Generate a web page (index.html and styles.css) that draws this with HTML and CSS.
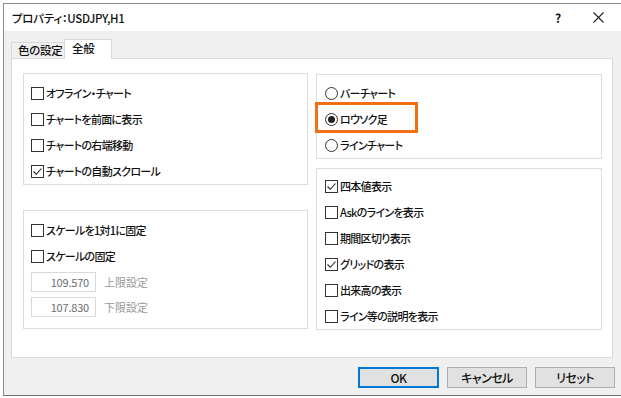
FILE: index.html
```html
<!DOCTYPE html>
<html lang="ja">
<head>
  <meta charset="UTF-8">
  <title>プロパティ：USDJPY,H1</title>
  <link rel="stylesheet" href="styles.css">
</head>
<body>

<div class="window">
  <div class="titlebar">
    <span class="title">プロパティ：USDJPY,H1</span>
    <span class="help">?</span>
    <span class="close">
      <svg width="11" height="11" viewBox="0 0 11 11"><path d="M0.5 0.5L10.5 10.5M10.5 0.5L0.5 10.5" stroke="#222" stroke-width="1.1"/></svg>
    </span>
  </div>

  <div class="dlg-body">
    <div class="tabs">
      <div class="tab">色の設定</div>
      <div class="tab active">全般</div>
    </div>

    <div class="panel">
      <div class="col col-left">
        <div class="group g-view">
          <div class="row"><span class="box"></span>オフライン・チャート</div>
          <div class="row"><span class="box"></span>チャートを前面に表示</div>
          <div class="row"><span class="box"></span>チャートの右端移動</div>
          <div class="row"><span class="box checked"><svg width="11" height="11" viewBox="0 0 11 11"><path d="M1.5 5.5L4.3 8.3L9.5 2.5" fill="none" stroke="#222" stroke-width="1.1"/></svg></span>チャートの自動スクロール</div>
        </div>
        <div class="group g-scale">
          <div class="row"><span class="box"></span>スケールを1対1に固定</div>
          <div class="row"><span class="box"></span>スケールの固定</div>
          <div class="field"><span class="num">109.570</span><span class="lbl">上限設定</span></div>
          <div class="field"><span class="num">107.830</span><span class="lbl">下限設定</span></div>
        </div>
      </div>

      <div class="col col-right">
        <div class="group g-type">
          <div class="row"><span class="radio"></span>バーチャート</div>
          <div class="row"><span class="radio on"></span>ロウソク足</div>
          <div class="row"><span class="radio"></span>ラインチャート</div>
          <div class="mark"></div>
        </div>
        <div class="group g-show">
          <div class="row"><span class="box checked"><svg width="11" height="11" viewBox="0 0 11 11"><path d="M1.5 5.5L4.3 8.3L9.5 2.5" fill="none" stroke="#222" stroke-width="1.1"/></svg></span>四本値表示</div>
          <div class="row"><span class="box"></span>Askのラインを表示</div>
          <div class="row"><span class="box"></span>期間区切り表示</div>
          <div class="row"><span class="box checked"><svg width="11" height="11" viewBox="0 0 11 11"><path d="M1.5 5.5L4.3 8.3L9.5 2.5" fill="none" stroke="#222" stroke-width="1.1"/></svg></span>グリッドの表示</div>
          <div class="row"><span class="box"></span>出来高の表示</div>
          <div class="row"><span class="box"></span>ライン等の説明を表示</div>
        </div>
      </div>
    </div>

    <div class="buttons">
      <button class="btn default">OK</button>
      <button class="btn">キャンセル</button>
      <button class="btn">リセット</button>
    </div>
  </div>
</div>

</body>
</html>
```

FILE: styles.css
```css
* { box-sizing: border-box; }
body {
  margin: 0; padding: 0;
  font-family: "Noto Sans CJK JP", "Noto Sans", sans-serif;
  font-size: 11px;
  font-weight: 500;
  letter-spacing: -0.7px;
  font-feature-settings: "palt";
  color: #111;
  background: #fff;
  overflow: hidden;
}
.window {
  margin: 3px 0 0 3px;
  width: 620px;
  border-top: 1px solid #8c8c8c;
  border-left: 1px solid #8c8c8c;
  border-bottom: 1px solid #6e6e6e;
}

/* title bar */
.titlebar {
  height: 27px;
  background: #fff;
  display: flex;
  align-items: center;
  padding-left: 8px;
}
.title { flex: 1; font-size: 11.5px; letter-spacing: -0.3px; }
.help { width: 38px; font-weight: bold; font-size: 12px; }
.close { width: 28px; display: flex; align-items: center; margin-right: 2px; }

/* dialog body */
.dlg-body {
  background: #f0f0f0;
  padding: 8px 0 7px 0;
}
.tabs {
  display: flex;
  align-items: flex-end;
  height: 19px;
  margin-left: 7px;
}
.tab {
  height: 16px;
  width: 53px;
  border: 1px solid #d9d9d9;
  border-right: none;
  border-bottom: none;
  padding-left: 6px;
  line-height: 15px;
  font-size: 11.5px;
  letter-spacing: -0.3px;
  white-space: nowrap;
  background: #f0f0f0;
}
.tab.active {
  height: 20px;
  width: 48px;
  margin-bottom: -1px;
  border-right: 1px solid #d9d9d9;
  background: #fff;
  padding-left: 7px;
  line-height: 17px;
  position: relative;
  z-index: 1;
}
.panel {
  margin: 0 10px 0 7px;
  height: 300px;
  background: #fff;
  border: 1px solid #d9d9d9;
  padding: 14px 9px 0 11px;
  display: flex;
  gap: 8px;
}
.col { display: flex; flex-direction: column; }
.col-left { width: 285px; gap: 25px; }
.col-right { width: 286px; gap: 9px; padding-top: 1px; }

.group {
  border: 1px solid #dcdcdc;
  background: #fff;
  position: relative;
}
.g-view { padding: 6px 0 0 7px; }
.g-scale { padding: 6px 0 11px 7px; }
.g-type { padding: 5px 0 0 8px; }
.g-show { padding: 4px 0 0 8px; }

.row {
  height: 26px;
  display: flex;
  align-items: center;
  white-space: nowrap;
}
.box {
  width: 13px; height: 13px;
  border: 1px solid #333;
  background: #fff;
  margin-right: 2px;
  display: flex;
  align-items: center;
  justify-content: center;
  flex: none;
}
.radio {
  width: 13px; height: 13px;
  border: 1px solid #333;
  border-radius: 50%;
  margin-right: 2px;
  display: flex;
  align-items: center;
  justify-content: center;
  flex: none;
}
.radio.on::after {
  content: "";
  width: 7px; height: 7px;
  border-radius: 50%;
  background: #222;
}

.field {
  display: flex;
  align-items: center;
  height: 20px;
  margin-top: 3px;
}
.field + .field { margin-top: 5px; }
.num {
  width: 65px; height: 20px;
  border: 1px solid #d9d9d9;
  text-align: right;
  padding-right: 6px;
  line-height: 18px;
  letter-spacing: -0.2px;
  font-weight: 400;
  color: #6d6d6d;
}
.lbl { margin-left: 8px; color: #9a9a9a; letter-spacing: 0; font-weight: 400; }

/* orange annotation box */
.mark {
  position: absolute;
  left: -2px; top: 27px;
  width: 103px; height: 31px;
  border: 3px solid #f26f12;
}

.buttons {
  display: flex;
  justify-content: flex-end;
  gap: 8px;
  margin-top: 9px;
  padding-right: 8px;
}
.btn {
  width: 80px; height: 21px;
  background: #e1e1e1;
  border: 1px solid #adadad;
  font-family: inherit;
  font-size: 12px;
  font-weight: 500;
  letter-spacing: -0.5px;
  font-feature-settings: "palt";
  color: #111;
  padding: 0;
}
.btn.default {
  width: 81px;
  border: 2px solid #0078d7;
}
```
